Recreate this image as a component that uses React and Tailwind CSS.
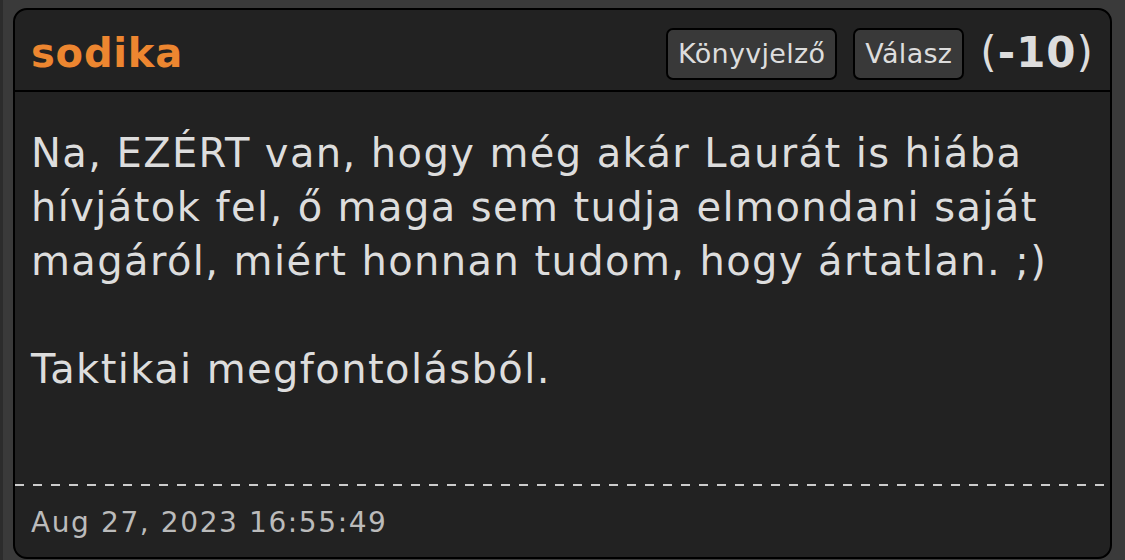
function Comment() {
  return (
    <div className="flex-1 flex flex-col bg-[#222222] border-2 border-black rounded-[14px] overflow-hidden">
      <div className="h-[82px] flex items-center justify-between pt-[8px] pl-[16px] pr-[16px] border-b-2 border-black">
        <span className="text-[40px] font-bold text-[#ed8630] leading-none tracking-[0.8px] -mt-[2px]">sodika</span>
        <div className="flex items-center gap-[16px]">
          <button className="h-[52px] px-[10px] bg-[#393939] border-2 border-black rounded-[7px] text-[27px] tracking-[0.3px] text-[#dddddd]">
            Könyvjelző
          </button>
          <button className="h-[52px] px-[10px] bg-[#393939] border-2 border-black rounded-[7px] text-[27px] tracking-[0.3px] text-[#dddddd]">
            Válasz
          </button>
          <span className="text-[42px] text-[#dddddd] leading-none tracking-[1px] -mt-[2px]">
            (<span className="font-bold">-10</span>)
          </span>
        </div>
      </div>
      <div className="flex-1 pl-[16px] pr-4 pt-[34px] text-[40px] leading-[54px] tracking-[1.4px] text-[#dddddd]">
        Na, EZÉRT van, hogy még akár Laurát is hiába hívjátok fel, ő maga sem tudja elmondani saját magáról, miért honnan tudom, hogy ártatlan. ;)
        <br />
        <br />
        Taktikai megfontolásból.
      </div>
      <div className="h-[2px] bg-[linear-gradient(to_right,#cccccc_50%,transparent_50%)] bg-[length:18px_2px]" />
      <div className="h-[71px] flex items-center pt-[3px] pl-[16px] text-[28px] tracking-[1.6px] text-[#bbbbbb]">
        Aug 27, 2023 16:55:49
      </div>
    </div>
  )
}

export default function App() {
  return (
    <div
      className="w-[1125px] h-[560px] bg-[#3a3a3a] flex pl-[10px] pr-[13px] pt-2 pb-[1px] border-l-[3px] border-[#2c2c2c]"
      style={{ fontFamily: '"DejaVu Sans", Verdana, sans-serif' }}
    >
      <Comment />
    </div>
  )
}
